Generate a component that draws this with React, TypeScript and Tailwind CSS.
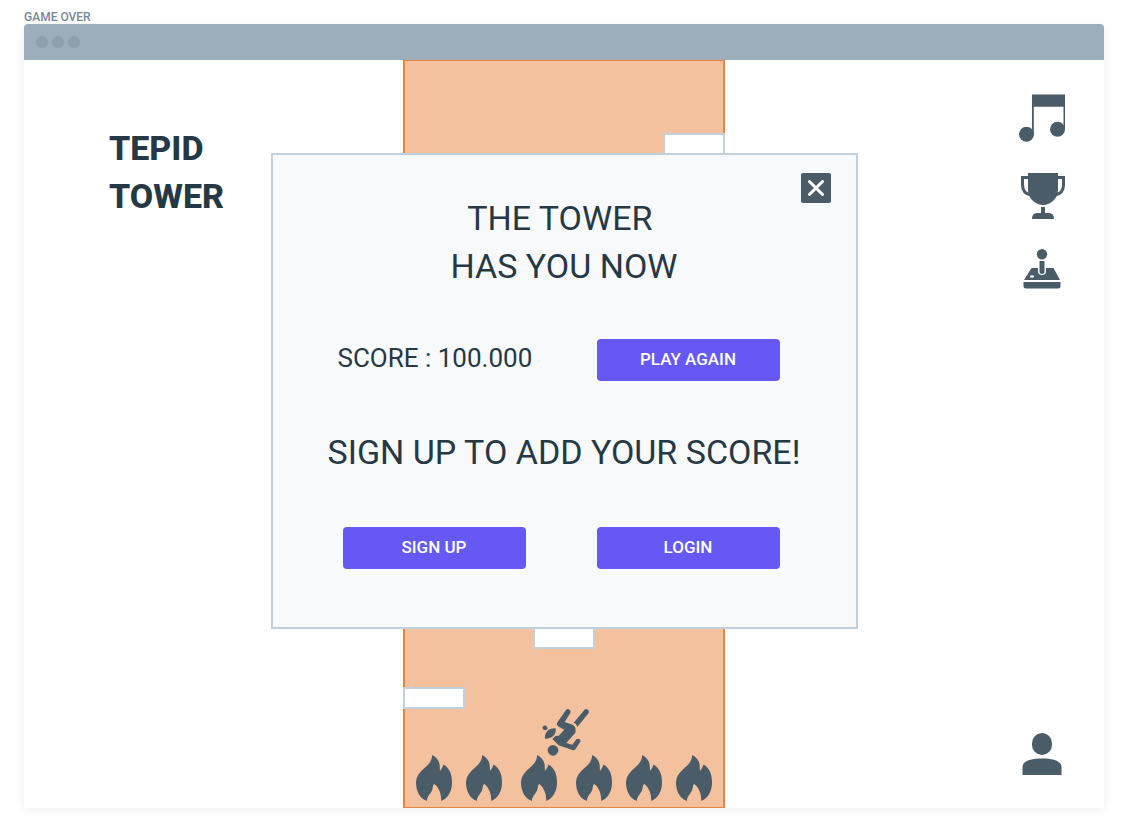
import type { ReactNode } from "react";

const flames = [
  "left-[11px]",
  "left-[61px]",
  "left-[116px]",
  "left-[171px]",
  "left-[221px]",
  "left-[271px]",
];

const platforms = [
  "top-[72px] -right-[2px]",
  "top-[566px] left-[128px]",
  "top-[626px] -left-[2px]",
];

function Flame({ place }: { place: string }) {
  return (
    <svg viewBox="0 0 36 46" className={`absolute bottom-[6px] h-[46px] w-9 fill-[#4b5c69] ${place}`} aria-hidden="true">
      <path d="M16.2 0C20.5 2.2 23 5.600 23.600 9.500L24 16Q26.500 13 27.600 9.600C34 13.500 36 20 36 27.500C36 36 32 43.500 25.200 46C25.400 39.500 23.500 33 18.300 29C16.700 29.500 17.200 31.500 16.200 35C14.500 39 10.800 41.500 11 46C3.500 43.500 0 35.500 0 27.500C0.400 21 4 17 8.500 13C13.500 8.500 16 5.500 16.200 0Z" />
    </svg>
  );
}

function FallingPlayer() {
  return (
    <svg viewBox="426 264 144 144" className="absolute bottom-[51px] left-[137px] size-12 fill-[#4b5c69]" aria-hidden="true">
      <path d="M429 319L436 316L441 320L443 326L438 331L431 329L427 324Z" />
      <path d="M467 325C447 323 432 338 435 356C454 358 470 344 467 325Z" />
      <circle cx="459" cy="391" r="16" />
      <path d="M553 270A8 8 0 0 1 566 279L532 321L528 312L521 308Z" />
      <path d="M498 270A8 8 0 0 1 511 279L494 306L518 314Q530 321 526 338L499 369L517 374L529 358A8 8 0 0 1 542 364L526 388Q523 392 517 390L476 376L457 357L467 347L475 348L493 329L476 320Q468 316 472 307Z" />
    </svg>
  );
}

function MusicIcon() {
  return (
    <svg viewBox="0 0 48 48" className="size-12 fill-[#4b5c69]" aria-hidden="true">
      <path d="M14 0.500H47V36H45.500V12.700H15.800V40H14Z" />
      <circle cx="8.500" cy="40.200" r="7.500" />
      <circle cx="39.500" cy="35.300" r="7.500" />
    </svg>
  );
}

function TrophyIcon() {
  return (
    <svg viewBox="0 0 48 48" className="size-12 overflow-visible fill-[#4b5c69]" aria-hidden="true">
      <path d="M10 3H40V20C40 28 33 35 25 35C17 35 10 28 10 20Z" />
      <path d="M11 7.500H4.500V15C4.500 20.500 7.500 24 13 25M39 7.500H45.500V15C45.500 20.500 42.500 24 37 25" fill="none" stroke="#4b5c69" strokeWidth="3" />
      <path d="M23 37H27V43H31Q36 43 36 49H14Q14 43 19 43H23Z" />
    </svg>
  );
}

function JoystickIcon() {
  return (
    <svg viewBox="0 0 48 48" className="size-12 fill-[#4b5c69]" aria-hidden="true">
      <circle cx="24" cy="8.200" r="5.200" />
      <path d="M13.500 22H20V25Q20 29 24 29Q28 29 28 25V22H35.500L42 34H6Z" />
      <path d="M21.500 15H26.500V25.500Q26.500 28 24 28Q21.500 28 21.500 25.500Z" />
      <ellipse cx="14" cy="30.500" rx="2" ry="1.300" fill="#ffffff" />
      <path d="M5.500 36H42.500V40Q42.500 42.500 40 42.500H8Q5.500 42.500 5.500 40Z" />
    </svg>
  );
}

function UserIcon() {
  return (
    <svg viewBox="0 0 48 48" className="size-12 fill-[#4b5c69]" aria-hidden="true">
      <rect x="14" y="0" width="20" height="22" rx="10" />
      <path d="M4.500 42V34C4.500 28 13 25.500 24 25.500C35 25.500 43.500 28 43.500 34V42Z" />
    </svg>
  );
}

function IconButton({ label, children }: { label: string; children: ReactNode }) {
  return (
    <button type="button" aria-label={label} className="block size-12 cursor-pointer">
      {children}
    </button>
  );
}

function ActionButton({ children }: { children: ReactNode }) {
  return (
    <button type="button" className="h-[42px] w-[183px] cursor-pointer rounded bg-[#6558f5] text-[17px] font-medium text-white">
      {children}
    </button>
  );
}

export default function App() {
  return (
    <div className="flex min-h-screen flex-col bg-white px-6 pt-[10px] pb-6 font-['Roboto',sans-serif] text-[#273845]">
      <p className="text-xs leading-[14px] font-medium text-[#788896]">GAME OVER</p>
      <div className="flex flex-1 flex-col rounded-t shadow-[0_2px_10px_rgba(0,0,0,0.07)]">
        <div className="flex h-9 items-center gap-1 rounded-t bg-[#9eadba] px-3">
          <span className="size-3 rounded-full bg-[#8e9eac]" />
          <span className="size-3 rounded-full bg-[#8e9eac]" />
          <span className="size-3 rounded-full bg-[#8e9eac]" />
        </div>

        <main className="relative grid min-h-[748px] flex-1 grid-cols-[1fr_322px_1fr] bg-white">
          <h1 className="pt-16 pl-[85px] text-[34px] leading-[48px] font-extrabold">
            TEPID
            <br />
            TOWER
          </h1>

          <div className="relative border-x-2 border-y border-[#e5853f] bg-[#f3c19e]">
            {platforms.map((place) => (
              <div key={place} className={`absolute h-[22px] w-[62px] border-2 border-[#c2d0db] bg-white ${place}`} />
            ))}
            <FallingPlayer />
            {flames.map((place) => (
              <Flame key={place} place={place} />
            ))}
          </div>

          <nav className="flex flex-col items-end justify-between pt-[34px] pr-[38px] pb-[27px]">
            <div className="flex flex-col gap-7">
              <IconButton label="Music"><MusicIcon /></IconButton>
              <IconButton label="Leaderboard"><TrophyIcon /></IconButton>
              <IconButton label="Play"><JoystickIcon /></IconButton>
            </div>
            <IconButton label="Account"><UserIcon /></IconButton>
          </nav>

          <section
            role="dialog"
            aria-labelledby="dialog-title"
            className="absolute inset-x-0 top-[93px] mx-auto w-[587px] border-2 border-[#c2d0db] bg-[#f8f9fb] pt-[39px] pb-[58px]"
          >
            <button
              type="button"
              aria-label="Close"
              className="absolute top-[18px] right-[25px] flex size-[30px] cursor-pointer items-center justify-center rounded-xs bg-[#4b5c69]"
            >
              <svg viewBox="0 0 16 16" className="size-4" fill="none" stroke="#ffffff" strokeWidth="3" strokeLinecap="round" aria-hidden="true">
                <path d="M1.500 1.500L14.500 14.500M14.500 1.500L1.500 14.500" />
              </svg>
            </button>
            <h2 id="dialog-title" className="text-center text-[34px] leading-[48px]">
              THE TOWER&nbsp;
              <br />
              HAS YOU NOW
            </h2>
            <div className="mt-[49px] flex items-start justify-between pr-[76px] pl-[65px]">
              <p className="text-[26px] leading-[38px] whitespace-nowrap">SCORE : 100.000</p>
              <ActionButton>PLAY AGAIN</ActionButton>
            </div>
            <p className="mt-[47px] text-center text-[34px] leading-[48px] whitespace-nowrap">SIGN UP TO ADD YOUR SCORE!</p>
            <div className="mt-[51px] flex justify-between pr-[76px] pl-[70px]">
              <ActionButton>SIGN UP</ActionButton>
              <ActionButton>LOGIN</ActionButton>
            </div>
          </section>
        </main>
      </div>
    </div>
  );
}
